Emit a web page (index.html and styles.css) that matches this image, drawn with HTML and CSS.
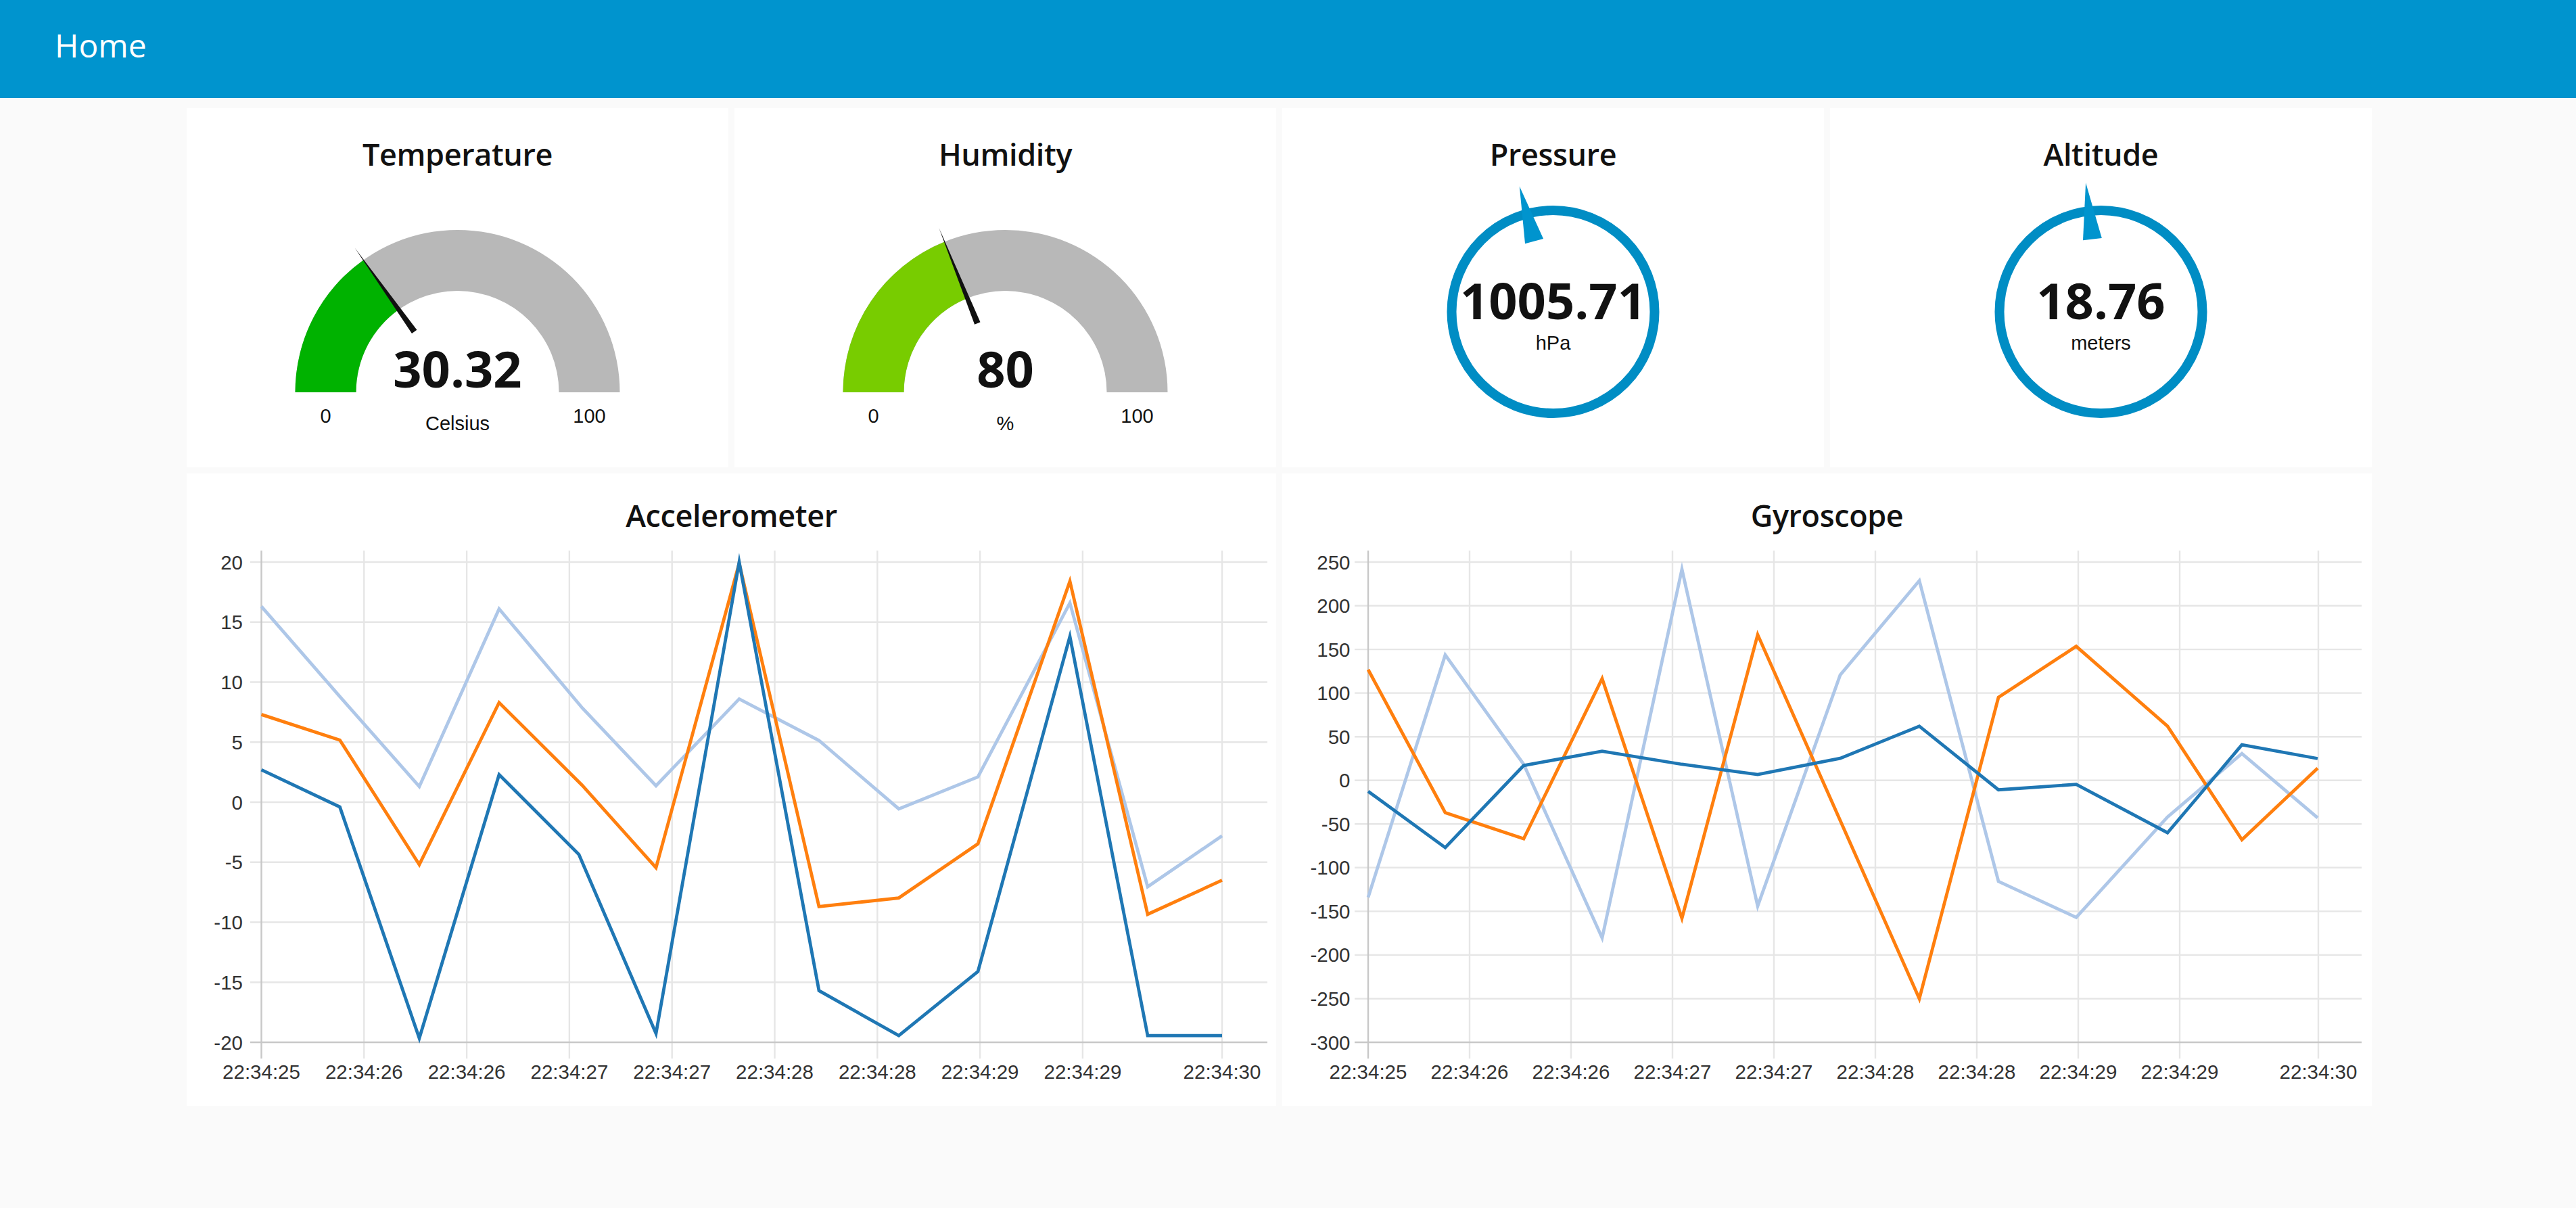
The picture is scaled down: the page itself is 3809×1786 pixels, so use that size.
FILE: index.html
```html
<!DOCTYPE html>
<html lang="en">
<head>
<meta charset="utf-8">
<title>Home</title>
<link rel="stylesheet" href="styles.css">
</head>
<body>
<header class="topbar"><span class="topbar-title">Home</span></header>
<main class="content">
  <div class="card">
    <div class="card-title">Temperature</div>
    <svg class="gauge-svg" viewBox="0 0 801 433">
      <path class="g-bg" d="M160.5 322 A240 240 0 0 1 640.5 322 L550.5 322 A150 150 0 0 0 250.5 322 Z"/>
      <path class="g-fill-temp" d="M160.5 322 A240 240 0 0 1 261.4 126.4 L313.6 199.8 A150 150 0 0 0 250.5 322 Z"/>
      <polygon class="g-needle" points="340.4,229.8 333.0,235.0 248.6,108.5"/>
      <text class="g-value" x="400.5" y="315">30.32</text>
      <text class="g-lim" x="205.5" y="367">0</text>
      <text class="g-lim" x="595.5" y="367">100</text>
      <text class="g-unit" x="400.5" y="378">Celsius</text>
    </svg>
  </div>
  <div class="card">
    <div class="card-title">Humidity</div>
    <svg class="gauge-svg" viewBox="0 0 801 433">
      <path class="g-bg" d="M160.5 322 A240 240 0 0 1 640.5 322 L550.5 322 A150 150 0 0 0 250.5 322 Z"/>
      <path class="g-fill-hum" d="M160.5 322 A240 240 0 0 1 310.6 99.5 L344.3 182.9 A150 150 0 0 0 250.5 322 Z"/>
      <polygon class="g-needle" points="363.5,218.3 355.1,221.7 302.4,79.1"/>
      <text class="g-value" x="400.5" y="315">80</text>
      <text class="g-lim" x="205.5" y="367">0</text>
      <text class="g-lim" x="595.5" y="367">100</text>
      <text class="g-unit" x="400.5" y="378">%</text>
    </svg>
  </div>
  <div class="card">
    <div class="card-title">Pressure</div>
    <svg class="gauge-svg" viewBox="0 0 801 433">
      <circle class="d-ring" cx="400.5" cy="203" r="150"/>
      <polygon class="d-pointer" transform="rotate(-15 400.5 203)" points="400.5,11 386.5,95 414.5,95"/>
      <text class="g-value" x="400.5" y="214">1005.71</text>
      <text class="g-unit" x="400.5" y="259">hPa</text>
    </svg>
  </div>
  <div class="card">
    <div class="card-title">Altitude</div>
    <svg class="gauge-svg" viewBox="0 0 801 433">
      <circle class="d-ring" cx="400.5" cy="203" r="150"/>
      <polygon class="d-pointer" transform="rotate(-6.7 400.5 203)" points="400.5,11 386.5,95 414.5,95"/>
      <text class="g-value" x="400.5" y="214">18.76</text>
      <text class="g-unit" x="400.5" y="259">meters</text>
    </svg>
  </div>

  <div class="card card-wide">
    <div class="card-title chart-title">Accelerometer</div>
    <svg class="chart-svg" viewBox="0 0 1611 843">
      <g class="grid">
        <line x1="94" y1="39" x2="1598" y2="39"/>
        <line x1="94" y1="127.75" x2="1598" y2="127.75"/>
        <line x1="94" y1="216.5" x2="1598" y2="216.5"/>
        <line x1="94" y1="305.25" x2="1598" y2="305.25"/>
        <line x1="94" y1="394" x2="1598" y2="394"/>
        <line x1="94" y1="482.75" x2="1598" y2="482.75"/>
        <line x1="94" y1="571.5" x2="1598" y2="571.5"/>
        <line x1="94" y1="660.25" x2="1598" y2="660.25"/>
        <line x1="262.3" y1="22" x2="262.3" y2="773"/>
        <line x1="414.1" y1="22" x2="414.1" y2="773"/>
        <line x1="565.9" y1="22" x2="565.9" y2="773"/>
        <line x1="717.7" y1="22" x2="717.7" y2="773"/>
        <line x1="869.5" y1="22" x2="869.5" y2="773"/>
        <line x1="1021.3" y1="22" x2="1021.3" y2="773"/>
        <line x1="1173.1" y1="22" x2="1173.1" y2="773"/>
        <line x1="1324.9" y1="22" x2="1324.9" y2="773"/>
        <line x1="1531" y1="22" x2="1531" y2="773"/>
      </g>
      <g class="axis">
        <line x1="110.5" y1="22" x2="110.5" y2="773"/>
        <line x1="94" y1="749" x2="1598" y2="749"/>
      </g>
      <g class="ylab">
        <text x="83" y="49.5">20</text>
        <text x="83" y="138.25">15</text>
        <text x="83" y="227">10</text>
        <text x="83" y="315.75">5</text>
        <text x="83" y="404.5">0</text>
        <text x="83" y="493.25">-5</text>
        <text x="83" y="582">-10</text>
        <text x="83" y="670.75">-15</text>
        <text x="83" y="759.5">-20</text>
      </g>
      <g class="xlab">
        <text x="110.5" y="803">22:34:25</text>
        <text x="262.3" y="803">22:34:26</text>
        <text x="414.1" y="803">22:34:26</text>
        <text x="565.9" y="803">22:34:27</text>
        <text x="717.7" y="803">22:34:27</text>
        <text x="869.5" y="803">22:34:28</text>
        <text x="1021.3" y="803">22:34:28</text>
        <text x="1173.1" y="803">22:34:29</text>
        <text x="1324.9" y="803">22:34:29</text>
        <text x="1531" y="803">22:34:30</text>
      </g>
      <polyline class="s-light" points="110.5,104.7 226.5,237.8 344,370.9 462,108.2 585,254.7 694,369.7 817,241.4 935,302.8 1053,403.9 1170,356.7 1306,99.4 1421,519.1 1531,443.7"/>
      <polyline class="s-orange" points="110.5,264.4 226.5,302.2 344,486.3 462,246.7 585,369.2 694,490.9 817,40.8 935,548.4 1053,535.6 1170,455.6 1306,67.4 1421,559.8 1531,509.4"/>
      <polyline class="s-blue" points="110.5,346.1 226.5,401.1 344,743 462,353.2 580,471.4 694,736 817,39 935,672.7 1053,739.1 1170,644.3 1306,149 1421,739.1 1531,739.1"/>
    </svg>
  </div>

  <div class="card card-wide">
    <div class="card-title chart-title">Gyroscope</div>
    <svg class="chart-svg" viewBox="0 0 1611 843">
      <g class="grid">
        <line x1="107" y1="39" x2="1596" y2="39"/>
        <line x1="107" y1="103.5" x2="1596" y2="103.5"/>
        <line x1="107" y1="168.1" x2="1596" y2="168.1"/>
        <line x1="107" y1="232.6" x2="1596" y2="232.6"/>
        <line x1="107" y1="297.2" x2="1596" y2="297.2"/>
        <line x1="107" y1="361.7" x2="1596" y2="361.7"/>
        <line x1="107" y1="426.3" x2="1596" y2="426.3"/>
        <line x1="107" y1="490.8" x2="1596" y2="490.8"/>
        <line x1="107" y1="555.4" x2="1596" y2="555.4"/>
        <line x1="107" y1="619.9" x2="1596" y2="619.9"/>
        <line x1="107" y1="684.5" x2="1596" y2="684.5"/>
        <line x1="277" y1="22" x2="277" y2="773"/>
        <line x1="427" y1="22" x2="427" y2="773"/>
        <line x1="577" y1="22" x2="577" y2="773"/>
        <line x1="727" y1="22" x2="727" y2="773"/>
        <line x1="877" y1="22" x2="877" y2="773"/>
        <line x1="1027" y1="22" x2="1027" y2="773"/>
        <line x1="1177" y1="22" x2="1177" y2="773"/>
        <line x1="1327" y1="22" x2="1327" y2="773"/>
        <line x1="1532" y1="22" x2="1532" y2="773"/>
      </g>
      <g class="axis">
        <line x1="127" y1="22" x2="127" y2="773"/>
        <line x1="107" y1="749" x2="1596" y2="749"/>
      </g>
      <g class="ylab">
        <text x="100.5" y="49.5">250</text>
        <text x="100.5" y="114">200</text>
        <text x="100.5" y="178.6">150</text>
        <text x="100.5" y="243.1">100</text>
        <text x="100.5" y="307.7">50</text>
        <text x="100.5" y="372.2">0</text>
        <text x="100.5" y="436.8">-50</text>
        <text x="100.5" y="501.3">-100</text>
        <text x="100.5" y="565.9">-150</text>
        <text x="100.5" y="630.4">-200</text>
        <text x="100.5" y="695">-250</text>
        <text x="100.5" y="759.5">-300</text>
      </g>
      <g class="xlab">
        <text x="127" y="803">22:34:25</text>
        <text x="277" y="803">22:34:26</text>
        <text x="427" y="803">22:34:26</text>
        <text x="577" y="803">22:34:27</text>
        <text x="727" y="803">22:34:27</text>
        <text x="877" y="803">22:34:28</text>
        <text x="1027" y="803">22:34:28</text>
        <text x="1177" y="803">22:34:29</text>
        <text x="1327" y="803">22:34:29</text>
        <text x="1532" y="803">22:34:30</text>
      </g>
      <polyline class="s-light" points="127,534.7 241,176.4 357,338 473,594.7 591,49.7 703,547.6 825,206 942,66.5 1059,511.1 1174,564.4 1309,415.9 1419,322.1 1531,417.2"/>
      <polyline class="s-orange" points="127,198 241,409.5 357,448.1 473,211.3 591,565.7 703,146.4 825,421 942,684.5 1059,239.1 1174,163.6 1309,281.7 1419,449.5 1531,343.7"/>
      <polyline class="s-blue" points="127,378 241,461.1 357,339.8 473,318.7 591,338 703,353.1 825,329.1 942,281.7 1059,375.7 1174,367.7 1309,439.2 1419,309.1 1531,329.5"/>
    </svg>
  </div>
</main>
</body>
</html>
```

FILE: styles.css
```css
* { box-sizing: border-box; }
html, body { margin: 0; padding: 0; }
body {
  background: #fafafa;
  font-family: "Open Sans", "Noto Sans", sans-serif;
  width: 3809px;
  height: 1786px;
  overflow: hidden;
}
.topbar {
  height: 145px;
  background: #0094ce;
  padding: 43px 0 0 81px;
}
.topbar-title {
  display: block;
  font-size: 48px;
  line-height: 48px;
  font-weight: 400;
  color: #ffffff;
}
.content {
  display: grid;
  grid-template-columns: repeat(4, 801px);
  grid-template-rows: 531px 935px;
  gap: 9px;
  padding: 15px 0 0 276px;
}
.card {
  background: #ffffff;
  display: flex;
  flex-direction: column;
}
.card-wide { grid-column: span 2; }
.card-title {
  height: 98px;
  padding-top: 38px;
  font-size: 45px;
  line-height: 60px;
  font-weight: 600;
  letter-spacing: -0.4px;
  text-align: center;
  color: #111111;
}
.chart-title {
  height: 92px;
  padding-top: 32px;
}
.gauge-svg { display: block; width: 801px; height: 433px; }
.chart-svg { display: block; width: 1611px; height: 843px; }

.g-bg { fill: #b8b8b8; }
.g-fill-temp { fill: #00b200; }
.g-fill-hum { fill: #78cc00; }
.g-needle { fill: #111111; }
.g-value {
  font-family: "Open Sans", sans-serif;
  font-weight: 700;
  font-size: 74px;
  fill: #111111;
  text-anchor: middle;
}
.g-lim, .g-unit {
  font-family: "Liberation Sans", Arial, sans-serif;
  font-size: 29px;
  fill: #111111;
  text-anchor: middle;
}
.d-ring { fill: none; stroke: #008dc4; stroke-width: 14; }
.d-pointer { fill: #0094ce; }

.grid line { stroke: #e6e6e6; stroke-width: 2.4; }
.axis line { stroke: #c8c8c8; stroke-width: 2.4; }
.ylab text, .xlab text {
  font-family: "Liberation Sans", Arial, sans-serif;
  font-size: 29.5px;
  fill: #333333;
}
.ylab text { text-anchor: end; }
.xlab text { text-anchor: middle; }
.s-light, .s-orange, .s-blue {
  fill: none;
  stroke-width: 4.8;
  stroke-linejoin: miter;
  stroke-miterlimit: 10;
}
.s-light { stroke: #aec7e8; }
.s-orange { stroke: #ff7f0e; }
.s-blue { stroke: #1f77b4; }
```
